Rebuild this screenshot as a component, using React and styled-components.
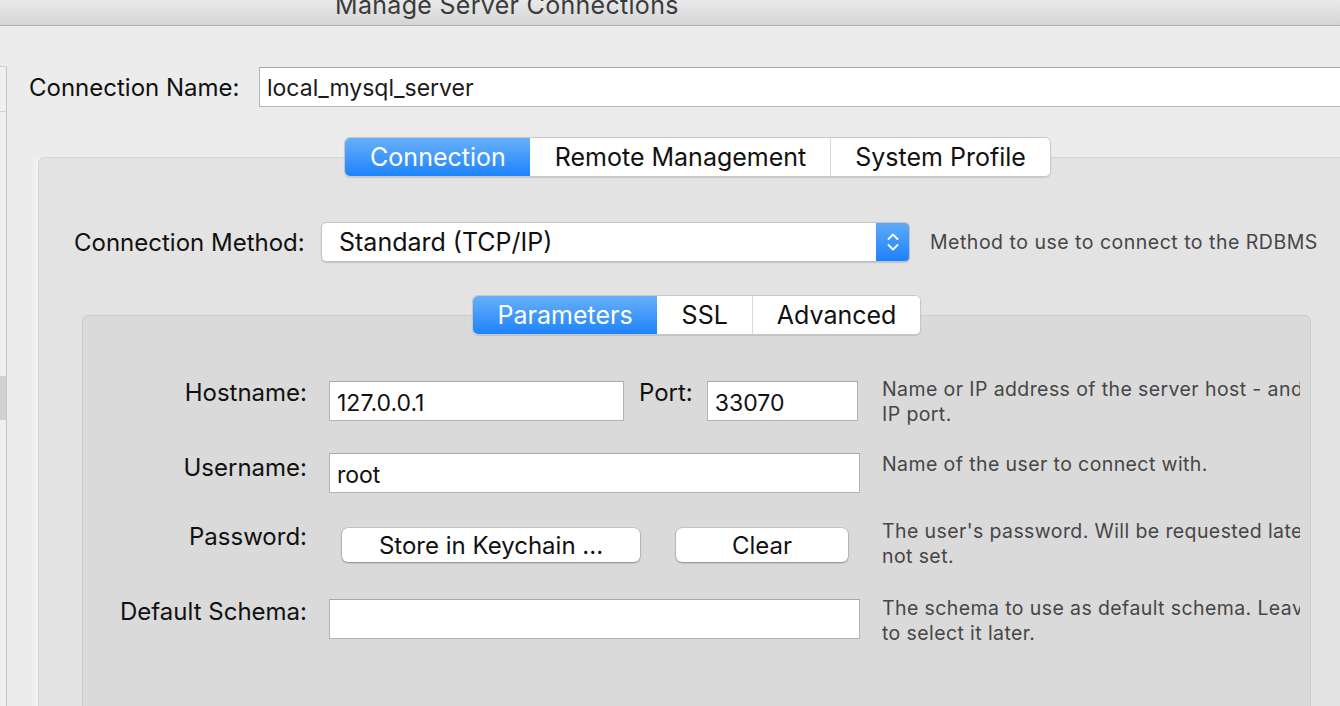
import React from "react";
import styled, { createGlobalStyle } from "styled-components";

const GlobalStyle = createGlobalStyle`
  html, body {
    margin: 0;
    padding: 0;
  }
  body {
    background: #ececec;
    font-family: Inter, "Liberation Sans", sans-serif;
    color: #1b1b1b;
    overflow: hidden;
  }
`;

const connectionTabs = ["Connection", "Remote Management", "System Profile"];
const paramTabs = ["Parameters", "SSL", "Advanced"];

function Segmented({ items, active }) {
  return (
    <TabBar>
      <SegmentGroup>
        {items.map((label, i) => (
          <Segment key={label} $active={i === active} $divider={i > 0 && i - 1 !== active}>
            {label}
          </Segment>
        ))}
      </SegmentGroup>
    </TabBar>
  );
}

function Stepper() {
  return (
    <StepperBox>
      <svg width="14" height="24" viewBox="0 0 14 24" fill="none">
        <path d="M2.5 9 L7 4.5 L11.5 9" stroke="#fff" strokeWidth="1.8" strokeLinecap="round" strokeLinejoin="round" />
        <path d="M2.5 15 L7 19.5 L11.5 15" stroke="#fff" strokeWidth="1.8" strokeLinecap="round" strokeLinejoin="round" />
      </svg>
    </StepperBox>
  );
}

export default function App() {
  return (
    <Page>
      <GlobalStyle />
      <TitleBar>
        <Title>Manage Server Connections</Title>
      </TitleBar>
      <Body>
        <Sidebar>
          <SideHeader />
          {[0, 1, 2, 3, 4, 5, 6].map((i) => (
            <SideRow key={i} $selected={i === 6} />
          ))}
        </Sidebar>
        <Main>
          <NameRow>
            <NameLabel>Connection Name:</NameLabel>
            <NameField>local_mysql_server</NameField>
          </NameRow>

          <OuterBox>
            <Segmented items={connectionTabs} active={0} />

            <MethodRow>
              <MethodLabel>Connection Method:</MethodLabel>
              <Select>
                <SelectText>Standard (TCP/IP)</SelectText>
                <Stepper />
              </Select>
              <MethodHelp>Method to use to connect to the RDBMS</MethodHelp>
            </MethodRow>

            <InnerBox>
              <Segmented items={paramTabs} active={0} />

              <FormRow $top={46} $height={40}>
                <FieldLabel $offset={-1}>Hostname:</FieldLabel>
                <FieldGroup>
                  <TextField $width={295}>127.0.0.1</TextField>
                  <PortLabel>Port:</PortLabel>
                  <TextField $width={151}>33070</TextField>
                </FieldGroup>
                <Help $offset={-4}>
                  <span>Name or IP address of the server host - and TCP/</span>
                  <span>IP port.</span>
                </Help>
              </FormRow>

              <FormRow $top={32} $height={40}>
                <FieldLabel $offset={2}>Username:</FieldLabel>
                <TextField>root</TextField>
                <Help $offset={-1}>
                  <span>Name of the user to connect with.</span>
                </Help>
              </FormRow>

              <FormRow $top={35} $height={34}>
                <FieldLabel $offset={-4}>Password:</FieldLabel>
                <FieldGroup>
                  <PushButton $width={298} $left={13}>Store in Keychain ...</PushButton>
                  <PushButton $width={172} $left={36}>Clear</PushButton>
                </FieldGroup>
                <Help $offset={-9}>
                  <span>The user's password. Will be requested later if it's</span>
                  <span>not set.</span>
                </Help>
              </FormRow>

              <FormRow $top={37} $height={40}>
                <FieldLabel $offset={0}>Default Schema:</FieldLabel>
                <TextField />
                <Help $offset={-3}>
                  <span>The schema to use as default schema. Leave blank</span>
                  <span>to select it later.</span>
                </Help>
              </FormRow>
            </InnerBox>
          </OuterBox>
        </Main>
      </Body>
    </Page>
  );
}

// window chrome

const Page = styled.div`
  width: 1340px;
  height: 706px;
  overflow: hidden;
  display: flex;
  flex-direction: column;
`;

const TitleBar = styled.div`
  height: 25px;
  flex: none;
  overflow: hidden;
  padding-left: 335px;
  background: linear-gradient(#e9e9e9, #d5d5d5);
  border-bottom: 1px solid #b2b2b2;
`;

const Title = styled.div`
  font-size: 25px;
  line-height: 25px;
  letter-spacing: 0.3px;
  margin-top: -7px;
  color: #3b3b3b;
  white-space: nowrap;
`;

const Body = styled.div`
  display: flex;
  flex: 1;
  min-height: 0;
`;

const Sidebar = styled.div`
  width: 6px;
  flex: none;
  margin-top: 40px;
  display: flex;
  flex-direction: column;
  background: #f0f0f0;
  border-top: 1px solid #cfcfcf;
  border-right: 1px solid #c5c5c5;
`;

const SideHeader = styled.div`
  height: 44px;
  flex: none;
  border-bottom: 1px solid #d2d2d2;
`;

const SideRow = styled.div`
  height: 44px;
  flex: none;
  background: ${(p) => (p.$selected ? "#d1d1d1" : "transparent")};
`;

const Main = styled.div`
  flex: 1;
  min-width: 0;
  display: flex;
  flex-direction: column;
`;

// connection name

const NameRow = styled.div`
  display: flex;
  align-items: center;
  margin-top: 41px;
  padding-left: 22px;
`;

const NameLabel = styled.div`
  width: 230px;
  flex: none;
  font-size: 24px;
  color: #111;
`;

const NameField = styled.div`
  width: 1120px;
  flex: none;
  box-sizing: border-box;
  height: 40px;
  padding: 7px 7px 0;
  font-size: 23px;
  line-height: 26px;
  background: #fff;
  border: 1px solid #b5b5b5;
  border-top-color: #a9a9a9;
  white-space: nowrap;
`;

// group boxes

const OuterBox = styled.div`
  margin: 50px 0 0 31px;
  width: 1317px;
  flex: none;
  min-height: 720px;
  display: flex;
  flex-direction: column;
  background: #e3e3e3;
  border: 1px solid #d4d4d4;
  border-radius: 6px;
  box-shadow: -4px 0 3px rgba(255, 255, 255, 0.35);
`;

const InnerBox = styled.div`
  margin: 53px 45px 0 43px;
  flex: 1;
  display: flex;
  flex-direction: column;
  background: #dadada;
  border: 1px solid #cdcdcd;
  border-radius: 6px;
`;

// segmented tabs

const TabBar = styled.div`
  display: flex;
  justify-content: center;
  margin-top: -21px;
`;

const SegmentGroup = styled.div`
  display: flex;
  height: 40px;
  box-sizing: border-box;
  border: 1px solid #c7c7c7;
  border-radius: 6px;
  overflow: hidden;
  background: #fff;
  box-shadow: 0 1px 1px rgba(0, 0, 0, 0.12);
`;

const Segment = styled.div`
  display: flex;
  align-items: center;
  padding: 0 24px;
  font-size: 25px;
  white-space: nowrap;
  color: ${(p) => (p.$active ? "#fff" : "#111")};
  background: ${(p) => (p.$active ? "linear-gradient(#68b0fa, #1d83fb)" : "#fff")};
  border-left: 1px solid ${(p) => (p.$divider ? "#d9d9d9" : "transparent")};
`;

// connection method

const MethodRow = styled.div`
  display: flex;
  align-items: center;
  margin-top: 45px;
  padding-left: 35px;
`;

const MethodLabel = styled.div`
  width: 247px;
  flex: none;
  font-size: 24px;
  color: #111;
`;

const Select = styled.div`
  width: 589px;
  height: 40px;
  flex: none;
  box-sizing: border-box;
  display: flex;
  background: #fff;
  border: 1px solid #c3c3c3;
  border-radius: 5px;
  overflow: hidden;
  box-shadow: 0 1px 1px rgba(0, 0, 0, 0.14);
`;

const SelectText = styled.div`
  flex: 1;
  display: flex;
  align-items: center;
  padding-left: 17px;
  font-size: 25px;
  color: #111;
`;

const StepperBox = styled.div`
  width: 33px;
  flex: none;
  display: flex;
  align-items: center;
  justify-content: center;
  background: linear-gradient(#5eaaf9, #1c82fb);
`;

const MethodHelp = styled.div`
  margin-left: 20px;
  font-size: 19.5px;
  letter-spacing: 0.5px;
  color: #464646;
  white-space: nowrap;
`;

// parameter form

const FormRow = styled.div`
  display: grid;
  grid-template-columns: 224px 531px 418px;
  grid-template-rows: ${(p) => p.$height}px;
  column-gap: 22px;
  align-items: start;
  margin-top: ${(p) => p.$top}px;
`;

const FieldLabel = styled.div`
  text-align: right;
  font-size: 24px;
  line-height: 26px;
  margin-top: ${(p) => p.$offset}px;
  color: #111;
  white-space: nowrap;
`;

const FieldGroup = styled.div`
  display: flex;
  align-items: flex-start;
`;

const TextField = styled.div`
  box-sizing: border-box;
  width: ${(p) => (p.$width ? `${p.$width}px` : "100%")};
  flex: none;
  height: 40px;
  padding: 8px 7px 0;
  font-size: 23px;
  line-height: 26px;
  color: #111;
  background: #fff;
  border: 1px solid #b3b3b3;
  border-top-color: #a8a8a8;
`;

const PortLabel = styled.div`
  margin: -1px 14px 0 15px;
  font-size: 24px;
  line-height: 26px;
  color: #111;
`;

const PushButton = styled.div`
  box-sizing: border-box;
  width: ${(p) => p.$width}px;
  margin-left: ${(p) => p.$left}px;
  flex: none;
  height: 34px;
  display: flex;
  align-items: center;
  justify-content: center;
  font-size: 24px;
  color: #111;
  background: #fff;
  border-radius: 6px;
  box-shadow: 0 0 0 0.5px rgba(0, 0, 0, 0.18), 0 1px 2px rgba(0, 0, 0, 0.3);
`;

const Help = styled.div`
  display: flex;
  flex-direction: column;
  margin-top: ${(p) => p.$offset}px;
  overflow: hidden;
  font-size: 19.5px;
  letter-spacing: 0.4px;
  line-height: 25px;
  color: #464646;
  white-space: nowrap;
`;
